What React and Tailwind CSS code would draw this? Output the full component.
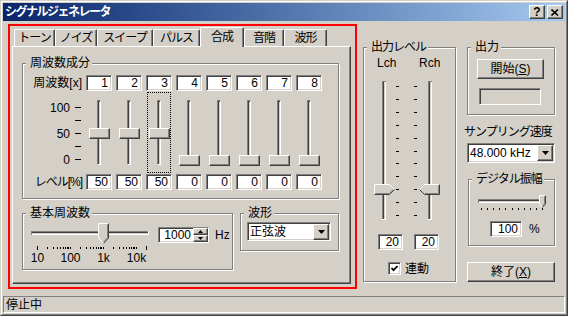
import React from 'react';

const FONT = "font-['Liberation_Sans','Noto_Sans_CJK_JP',sans-serif]";
const RAISED =
  'border border-t-white border-l-white border-r-[#404040] border-b-[#404040] shadow-[inset_-1px_-1px_0_#808080] bg-[#d4d0c8]';
const SUNKEN =
  'border border-t-[#808080] border-l-[#808080] border-r-white border-b-white shadow-[inset_1px_1px_0_#404040,inset_-1px_-1px_0_#d4d0c8]';

const harmonics = [1, 2, 3, 4, 5, 6, 7, 8].map((n) => ({ n, level: n <= 3 ? 50 : 0 }));

const tabs = [
  { label: 'トーン', w: 'w-[41px]' },
  { label: 'ノイズ', w: 'w-[42px]' },
  { label: 'スイープ', w: 'w-[56px]' },
  { label: 'パルス', w: 'w-[47px]' },
  { label: '合成', w: 'w-[44px]', active: true },
  { label: '音階', w: 'w-[40px]' },
  { label: '波形', w: 'w-[43px]' },
];

const Edit = ({ value, className = '' }) => (
  <div className={`${SUNKEN} bg-white flex items-center justify-end pr-[3px] leading-none ${className}`}>{value}</div>
);

const Group = ({ label, className = '', labelClass = '', children }) => (
  <div className={`relative border border-[#808080] shadow-[1px_1px_0_#fff,inset_1px_1px_0_#fff] ${className}`}>
    <span className={`absolute left-[3px] top-[-8px] bg-[#d4d0c8] pl-[4px] pr-[2px] leading-[14px] whitespace-nowrap ${labelClass}`}>
      {label}
    </span>
    {children}
  </div>
);

const DownArrow = () => (
  <svg width="7" height="4" viewBox="0 0 7 4">
    <polygon points="0,0 7,0 3.5,4" fill="#000" />
  </svg>
);

const Combo = ({ text, className = '' }) => (
  <div className={`${SUNKEN} bg-white flex items-center ${className}`}>
    <span className="flex-1 pl-[2px] leading-none whitespace-nowrap">{text}</span>
    <div className={`${RAISED} w-[16px] h-[16px] mr-px flex items-center justify-center`}>
      <DownArrow />
    </div>
  </div>
);

const CaptionButton = ({ children }) => (
  <div className={`${RAISED} w-[16px] h-[14px] flex items-center justify-center`}>{children}</div>
);

// vertical trackbar used for the 8 harmonic levels
const VSlider = ({ value, focus }) => (
  <div className="flex justify-center">
    <div className={`relative w-[24px] h-[81px] mt-px border border-dotted ${focus ? 'border-black' : 'border-transparent'}`}>
      <div className="absolute left-[9px] top-[7px] w-[4px] h-[65px] border border-t-[#808080] border-l-[#808080] border-r-white border-b-white shadow-[inset_1px_1px_0_#404040] bg-[#d4d0c8]" />
      <div className={`absolute left-px w-[21px] h-[11px] ${RAISED}`} style={{ top: 62 - value * 0.54 }} />
    </div>
  </div>
);

const Scale = () => (
  <div className="flex flex-col items-end pt-[10px] pr-px">
    {['100', '', '50', '', '0'].map((t, i) => (
      <div key={i} className="h-[13px] flex items-center leading-none">
        {t && <span>{t}</span>}
        <span className="ml-[5px] w-[6px] h-px bg-black" />
      </div>
    ))}
  </div>
);

const HChannel = ({ x, y, w }) => (
  <g>
    <rect x={x} y={y} width={w} height="1" fill="#808080" />
    <rect x={x + 1} y={y + 1} width={w - 2} height="1" fill="#404040" />
    <rect x={x} y={y + 3} width={w} height="1" fill="#fff" />
    <rect x={x} y={y} width="1" height="4" fill="#808080" />
    <rect x={x + w - 1} y={y} width="1" height="4" fill="#fff" />
  </g>
);

const VChannel = ({ x, y, h }) => (
  <g>
    <rect x={x} y={y} width="1" height={h} fill="#808080" />
    <rect x={x + 1} y={y + 1} width="1" height={h - 2} fill="#404040" />
    <rect x={x + 3} y={y} width="1" height={h} fill="#fff" />
    <rect x={x} y={y} width="4" height="1" fill="#808080" />
    <rect x={x} y={y + h - 1} width="4" height="1" fill="#fff" />
  </g>
);

// down-pointing thumb, left edge x, top y, width w, body height bh
const DownThumb = ({ x, y, w, bh }) => {
  const r = x + w - 0.5;
  const l = x + 0.5;
  const mid = x + w / 2;
  const tip = y + bh + w / 2;
  return (
    <g>
      <polygon points={`${x},${y} ${x + w},${y} ${x + w},${y + bh} ${mid},${tip + 0.5} ${x},${y + bh}`} fill="#d4d0c8" />
      <path d={`M${l} ${y + bh} V${y + 0.5} H${r}`} stroke="#fff" fill="none" />
      <path d={`M${l} ${y + bh} L${mid} ${tip}`} stroke="#fff" fill="none" />
      <path d={`M${r} ${y + 0.5} V${y + bh} L${mid} ${tip}`} stroke="#404040" fill="none" />
      <path d={`M${r - 1} ${y + 1.5} V${y + bh - 0.5} L${mid} ${tip - 1.5}`} stroke="#808080" fill="none" />
    </g>
  );
};

const freqPos = (v) => 6 + 33 * Math.log10(v / 10);

const FreqSlider = () => {
  const ticks = [];
  for (let d = 10; d <= 10000; d *= 10) {
    for (let k = 1; k <= 9; k++) {
      if (d * k <= 20000) ticks.push(d * k);
    }
  }
  return (
    <div className="w-[118px]">
      <svg width="118" height="28" className="block">
        <HChannel x={0} y={8} w={118} />
        {ticks.map((v) => {
          const end = v === 10 || v === 20000;
          return <rect key={v} x={Math.round(freqPos(v))} y={end ? 23 : 24} width="1" height={end ? 4 : 2} fill="#000" />;
        })}
        <DownThumb x={67} y={0} w={11} bh={15} />
      </svg>
      <div className="relative h-[14px] leading-[14px]">
        {[
          [10, '10'],
          [100, '100'],
          [1000, '1k'],
          [10000, '10k'],
        ].map(([v, t]) => (
          <span key={t} className="absolute top-0 -translate-x-1/2" style={{ left: freqPos(v) + 0.5 }}>
            {t}
          </span>
        ))}
      </div>
    </div>
  );
};

const LevelMeter = ({ left, right }) => {
  const cy = (v) => Math.round(8 + (1 - v / 100) * 129);
  const l = cy(left);
  const r = cy(right);
  return (
    <svg width="70" height="146" className="block ml-[8px] mt-[8px]">
      <VChannel x={10} y={3} h={139} />
      <VChannel x={56} y={3} h={139} />
      {Array.from({ length: 11 }, (_, i) => {
        const y = Math.round(8 + i * 12.9);
        return (
          <g key={i}>
            <rect x="24" y={y} width="3" height="1" fill="#000" />
            <rect x="42" y={y} width="3" height="1" fill="#000" />
          </g>
        );
      })}
      {/* Lch thumb, pointing right */}
      <polygon points={`2,${l - 5} 17,${l - 5} 22.5,${l + 0.5} 17,${l + 6} 2,${l + 6}`} fill="#d4d0c8" />
      <path d={`M2.5 ${l + 5.5} V${l - 4.5} H17.5 L22.5 ${l + 0.5}`} stroke="#fff" fill="none" />
      <path d={`M22.5 ${l + 0.5} L17.5 ${l + 5.5} H2.5`} stroke="#404040" fill="none" />
      <path d={`M21 ${l + 0.5} L17 ${l + 4.5} H3.5`} stroke="#808080" fill="none" />
      {/* Rch thumb, pointing left */}
      <polygon points={`47.5,${r + 0.5} 53,${r - 5} 68,${r - 5} 68,${r + 6} 53,${r + 6}`} fill="#d4d0c8" />
      <path d={`M47.5 ${r + 0.5} L52.5 ${r - 4.5} H67.5`} stroke="#fff" fill="none" />
      <path d={`M67.5 ${r - 4.5} V${r + 5.5} H52.5 L47.5 ${r + 0.5}`} stroke="#404040" fill="none" />
      <path d={`M66.5 ${r - 3.5} V${r + 4.5} H53`} stroke="#808080" fill="none" />
    </svg>
  );
};

const AmpSlider = () => (
  <svg width="72" height="18" className="block ml-[7px] mt-[14px]">
    <HChannel x={2} y={5} w={64} />
    {Array.from({ length: 11 }, (_, i) => (
      <rect key={i} x={Math.round(5 + i * 6.1)} y="14" width="1" height="2" fill="#000" />
    ))}
    <DownThumb x={63} y={1} w={7} bh={9} />
  </svg>
);

const SpinArrow = ({ up }) => (
  <svg width="5" height="3" viewBox="0 0 5 3">
    <polygon points={up ? '2.5,0 5,3 0,3' : '0,0 5,0 2.5,3'} fill="#000" />
  </svg>
);

export default function App() {
  return (
    <div
      className={`relative w-[568px] h-[316px] bg-[#d4d0c8] border border-t-[#d4d0c8] border-l-[#d4d0c8] border-r-[#404040] border-b-[#404040] text-[12px] text-black ${FONT}`}
    >
      <div className="h-full flex flex-col border border-t-white border-l-white border-r-[#808080] border-b-[#808080] p-px">
        {/* Title bar */}
        <div className="h-[18px] shrink-0 flex items-center px-[2px] bg-linear-to-r from-[#0a246a] to-[#a6caf0]">
          <span className="text-white font-bold tracking-[-1.5px] leading-none">シグナルジェネレータ</span>
          <div className="ml-auto flex gap-[2px]">
            <CaptionButton>
              <span className="font-bold text-[12px] leading-none">?</span>
            </CaptionButton>
            <CaptionButton>
              <svg width="8" height="7" viewBox="0 0 8 7">
                <path d="M0.5 0.5 L7 6.5 M7 0.5 L0.5 6.5" stroke="#000" strokeWidth="1.6" />
              </svg>
            </CaptionButton>
          </div>
        </div>

        {/* Body */}
        <div className="flex-1 flex items-start">
          {/* Tab control */}
          <div className="ml-[9px] mt-[6px] w-[339px] flex flex-col">
            <div className="h-[19px] flex items-end pl-[2px]">
              {tabs.map((t) => (
                <div
                  key={t.label}
                  className={`${t.w} flex items-center justify-center leading-none tracking-[-1px] border-t border-l border-r border-t-white border-l-white border-r-[#404040] shadow-[inset_-1px_0_0_#808080] rounded-t-[2px] ${
                    t.active ? 'h-[20px] -mb-px relative z-10 bg-[#d4d0c8] pb-[2px]' : 'h-[17px]'
                  }`}
                >
                  {t.label}
                </div>
              ))}
            </div>
            <div className="h-[238px] border border-t-white border-l-white border-r-[#404040] border-b-[#404040] shadow-[inset_-1px_-1px_0_#808080] pl-[9px] pt-[16px]">
              <Group label="周波数成分" className="w-[317px] h-[136px]">
                <div className="grid grid-cols-[59px_repeat(8,26px)] grid-rows-[16px_83px_16px] gap-x-[4px] pt-[11px]">
                  <div className="flex items-center justify-end leading-none whitespace-nowrap">周波数[x]</div>
                  {harmonics.map((h) => (
                    <Edit key={`f${h.n}`} value={h.n} />
                  ))}
                  <Scale />
                  {harmonics.map((h) => (
                    <VSlider key={`s${h.n}`} value={h.level} focus={h.n === 3} />
                  ))}
                  <div className="flex items-center justify-end leading-none whitespace-nowrap tracking-[-1px]">レベル[%]</div>
                  {harmonics.map((h) => (
                    <Edit key={`l${h.n}`} value={h.level} />
                  ))}
                </div>
              </Group>

              <div className="flex items-start mt-[14px]">
                <Group label="基本周波数" className="w-[211px] h-[57px]">
                  <div className="flex items-start pl-[8px] pt-[9px]">
                    <FreqSlider />
                    <div className={`${SUNKEN} bg-white flex w-[51px] h-[16px] ml-[9px] mt-[4px]`}>
                      <div className="flex-1 flex items-center justify-end pr-[2px] leading-none">1000</div>
                      <div className="w-[15px] flex flex-col">
                        <div className={`${RAISED} flex-1 flex items-center justify-center`}>
                          <SpinArrow up />
                        </div>
                        <div className={`${RAISED} flex-1 flex items-center justify-center`}>
                          <SpinArrow />
                        </div>
                      </div>
                    </div>
                    <span className="ml-[6px] mt-[5px] leading-[14px]">Hz</span>
                  </div>
                </Group>
                <Group label="波形" className="ml-[7px] w-[99px] h-[38px]">
                  <Combo text="正弦波" className="ml-[6px] mt-[8px] w-[84px] h-[19px]" />
                </Group>
              </div>
            </div>
          </div>

          {/* Output level */}
          <Group label="出力レベル" labelClass="tracking-[-1px]" className="ml-[12px] mt-[26px] w-[93px] h-[235px]">
            <div className="flex h-[22px] pt-[9px] pl-[13px] leading-[13px]">
              <span className="w-[42px]">Lch</span>
              <span>Rch</span>
            </div>
            <LevelMeter left={20} right={20} />
            <div className="flex gap-[11px] pl-[14px] mt-[10px]">
              <Edit value="20" className="w-[25px] h-[16px]" />
              <Edit value="20" className="w-[25px] h-[16px]" />
            </div>
            <div className="flex items-center pl-[24px] mt-[12px]">
              <div className={`${SUNKEN} bg-white w-[13px] h-[13px] flex items-center justify-center`}>
                <svg width="9" height="9" viewBox="0 0 9 9">
                  <path d="M1.5 4 L3.5 6.2 L7.5 2" stroke="#000" strokeWidth="1.8" fill="none" />
                </svg>
              </div>
              <span className="ml-[4px] leading-none">連動</span>
            </div>
          </Group>

          {/* Right column */}
          <div className="ml-[11px] mt-[26px] w-[88px] flex flex-col">
            <Group label="出力" className="h-[68px]">
              <div className={`${RAISED} ml-[9px] mt-[11px] w-[67px] h-[20px] flex items-center justify-center leading-none`}>
                開始(<u>S</u>)
              </div>
              <div className={`${SUNKEN} bg-[#d4d0c8] ml-[11px] mt-[9px] w-[62px] h-[17px]`} />
            </Group>
            <div className="mt-[10px] -ml-[3px] leading-[14px] tracking-[-1px] whitespace-nowrap">サンプリング速度</div>
            <Combo text="48.000 kHz" className="mt-[4px] w-[88px] h-[20px]" />
            <Group label="デジタル振幅" labelClass="tracking-[-1px]" className="ml-px mt-[16px] w-[87px] h-[67px]">
              <AmpSlider />
              <div className="flex items-center pl-[21px] mt-[9px]">
                <Edit value="100" className="w-[32px] h-[16px]" />
                <span className="ml-[7px] leading-none">%</span>
              </div>
            </Group>
            <div className={`${RAISED} mt-[16px] w-[88px] h-[20px] flex items-center justify-center leading-none`}>
              終了(<u>X</u>)
            </div>
          </div>
        </div>

        {/* Status bar */}
        <div className="h-[17px] shrink-0 flex items-center pl-[2px] border border-t-[#808080] border-l-[#808080] border-r-white border-b-white leading-none">
          停止中
        </div>
      </div>

      {/* red highlight annotation */}
      <div className="pointer-events-none absolute left-[7px] top-[23px] w-[349px] h-[265px] border-2 border-[#ff0000]" />
    </div>
  );
}
